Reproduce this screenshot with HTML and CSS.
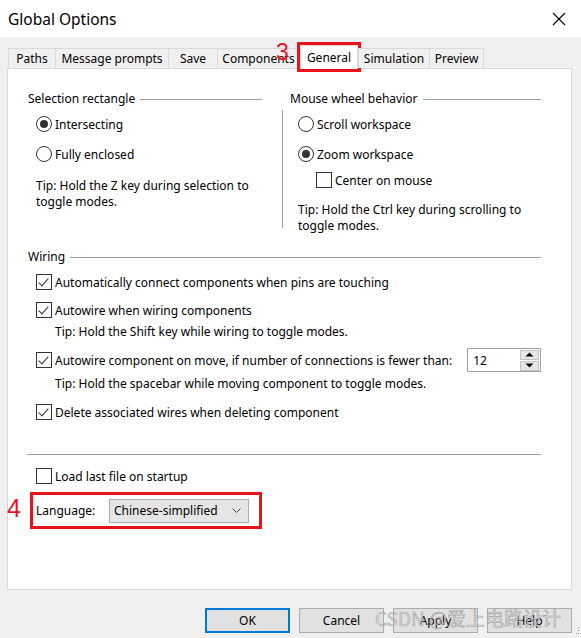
FILE: index.html
```html
<!DOCTYPE html>
<html>
<head>
<meta charset="utf-8">
<link rel="stylesheet" href="styles.css">
</head>
<body>
<div class="window">
  <div class="titlebar">
    <span class="title">Global Options</span>
    <svg class="close" width="14" height="14" viewBox="0 0 14 14"><path d="M1 1 L13 13 M13 1 L1 13" stroke="#000" stroke-width="1.1" fill="none"/></svg>
  </div>

  <div class="tabs">
    <div class="tab t-paths">Paths</div>
    <div class="tab t-msg">Message prompts</div>
    <div class="tab t-save">Save</div>
    <div class="tab t-comp">Components</div>
    <div class="tab t-gen active">General</div>
    <div class="tab t-sim">Simulation</div>
    <div class="tab t-prev">Preview</div>
  </div>

  <div class="panel">
    <div class="top">
      <div class="group left">
        <div class="heading"><span>Selection rectangle</span><i class="rule"></i></div>
        <div class="gbody">
          <div class="row r1"><span class="radio on"></span>Intersecting</div>
          <div class="row r2"><span class="radio"></span>Fully enclosed</div>
          <div class="tip t1">Tip: Hold the Z key during selection to<br>toggle modes.</div>
        </div>
      </div>
      <div class="group right">
        <div class="heading"><span>Mouse wheel behavior</span><i class="rule"></i></div>
        <div class="gbody divided">
          <div class="row"><span class="radio"></span>Scroll workspace</div>
          <div class="row r2"><span class="radio on"></span>Zoom workspace</div>
          <div class="row sub"><span class="check"></span>Center on mouse</div>
          <div class="tip t2">Tip: Hold the Ctrl key during scrolling to<br>toggle modes.</div>
        </div>
      </div>
    </div>

    <div class="wiring">
      <div class="heading"><span>Wiring</span><i class="rule"></i></div>
      <div class="wbody">
        <div class="row w1"><span class="check on"></span>Automatically connect components when pins are touching</div>
        <div class="row w2"><span class="check on"></span>Autowire when wiring components</div>
        <div class="tip wt">Tip: Hold the Shift key while wiring to toggle modes.</div>
        <div class="row w3"><span class="check on"></span>Autowire component on move, if number of connections is fewer than:
          <div class="spin"><span class="val">12</span>
            <div class="spinbtns">
              <span class="sb"><svg width="9" height="5" viewBox="0 0 9 5"><path d="M0.5 4.5 L4.5 0.5 L8.5 4.5Z" fill="#000"/></svg></span>
              <span class="sb"><svg width="9" height="5" viewBox="0 0 9 5"><path d="M0.5 0.5 L4.5 4.5 L8.5 0.5Z" fill="#000"/></svg></span>
            </div>
          </div>
        </div>
        <div class="tip wt">Tip: Hold the spacebar while moving component to toggle modes.</div>
        <div class="row w4"><span class="check on"></span>Delete associated wires when deleting component</div>
      </div>
    </div>

    <div class="sep"></div>
    <div class="row load"><span class="check"></span>Load last file on startup</div>
    <div class="langrow">
      <span class="langlabel">Language:</span>
      <div class="select"><span>Chinese-simplified</span>
        <svg width="9" height="5" viewBox="0 0 9 5"><path d="M0.5 0.5 L4.5 4.5 L8.5 0.5" stroke="#444" stroke-width="1" fill="none"/></svg>
      </div>
    </div>
  </div>

  <div class="buttons">
    <div class="btn default">OK</div>
    <div class="btn">Cancel</div>
    <div class="btn">Apply</div>
    <div class="btn">Help</div>
  </div>

  <svg class="grip" width="4" height="8" viewBox="0 0 4 8"><rect x="2" y="0" width="1" height="1" fill="#999"/><rect x="2" y="3" width="1" height="1" fill="#999"/><rect x="0" y="6" width="1" height="1" fill="#999"/><rect x="2" y="6" width="1" height="1" fill="#999"/></svg>
  <div class="mark mark3">3</div>
  <div class="mark mark4">4</div>
  <div class="redbox"></div>
  <div class="watermark">CSDN @爱上电路设计</div>
</div>
</body>
</html>
```
FILE: styles.css
```css
* { box-sizing: border-box; }
html, body { margin: 0; padding: 0; }
body {
  background: #f0f0f0;
  font-family: "Noto Sans", "Open Sans", "Liberation Sans", sans-serif;
  font-size: 12px;
  color: #000;
}
.window {
  position: relative;
  width: 581px;
  height: 638px;
  overflow: hidden;
  background: #f0f0f0;
}
.titlebar {
  height: 37px;
  background: #fff;
  display: flex;
  align-items: center;
  justify-content: space-between;
  padding: 0 15px 0 8px;
}
.title { font-size: 15.5px; }

.tabs {
  display: flex;
  margin: 11px 0 0 8px;
  height: 20px;
  position: relative;
  z-index: 2;
}
.tab {
  height: 20px;
  line-height: 19px;
  border: 1px solid #d9d9d9;
  border-bottom: none;
  margin-left: -1px;
  background: #f0f0f0;
  text-align: center;
}
.tab:first-child { margin-left: 0; }
.t-paths { width: 48px; }
.t-msg { width: 114px; }
.t-save { width: 50px; }
.t-comp { width: 83px; }
.t-gen { width: 58px; }
.t-sim { width: 72px; }
.t-prev { width: 55px; }
.tab.active {
  background: #fff;
  height: 24px;
  margin-top: -3px;
  line-height: 23px;
  margin-left: 0;
  margin-right: 1px;
  outline: 3px solid #e8141c;
}

.panel {
  margin-left: 7px;
  width: 565px;
  height: 522px;
  background: #fff;
  border: 1px solid #d9d9d9;
  padding: 22px 30px 0 20px;
  position: relative;
  z-index: 1;
}

.heading {
  display: flex;
  align-items: center;
  height: 16px;
  line-height: 16px;
}
.rule {
  flex: 1;
  border-top: 1px solid #a0a0a0;
  margin-left: 5px;
  margin-top: 1px;
}

.top {
  display: grid;
  grid-template-columns: 254px 1fr;
  height: 158px;
}
.left .heading { margin-right: 20px; }
.left .gbody { padding-left: 8px; }
.right .heading { margin-left: 8px; }
.gbody.divided {
  margin-top: 3px;
  height: 118px;
  border-left: 1px solid #a0a0a0;
  padding: 4px 0 0 15px;
}
.left .r1 { margin-top: 7px; }

.row {
  display: flex;
  align-items: center;
  height: 20px;
  white-space: nowrap;
}
.row.r2 { margin-top: 10px; }
.row.sub { margin-top: 6px; padding-left: 18px; }
.tip { line-height: 16px; }
.tip.t1 { margin-top: 14px; }
.tip.t2 { margin-top: 12px; }

.radio {
  width: 16px;
  height: 16px;
  border: 1px solid #333;
  border-radius: 50%;
  margin-right: 3px;
  position: relative;
  flex: none;
}
.radio.on::after {
  content: "";
  position: absolute;
  left: 3px;
  top: 3px;
  width: 8px;
  height: 8px;
  border-radius: 50%;
  background: #333;
}
.check {
  width: 16px;
  height: 16px;
  border: 1px solid #333;
  margin-right: 3px;
  position: relative;
  flex: none;
  background: #fff;
}
.check.on::after {
  content: "";
  position: absolute;
  left: 4px;
  top: 1px;
  width: 4px;
  height: 9px;
  border-right: 1px solid #333;
  border-bottom: 1px solid #333;
  transform: rotate(42deg);
}

.wbody { padding-left: 8px; }
.w1 { margin-top: 7px; }
.w2 { margin-top: 8px; }
.tip.wt { margin-top: 4px; padding-left: 19px; }
.w3 { margin-top: 8px; height: 24px; }
.w4 { margin-top: 10px; }

.spin {
  margin-left: 15px;
  width: 80px;
  height: 24px;
  border: 1px solid #a0a0a0;
  display: flex;
  align-items: center;
  justify-content: space-between;
  padding: 0 1px 0 5px;
}
.spinbtns {
  display: flex;
  flex-direction: column;
  gap: 1px;
}
.sb {
  width: 19px;
  height: 10px;
  background: #e6e6e6;
  border: 1px solid #c4c4c4;
  display: flex;
  align-items: center;
  justify-content: center;
}

.sep {
  margin: 32px 0 0 -1px;
  border-top: 1px solid #a0a0a0;
}
.row.load { margin: 11px 0 0 8px; }

.langrow {
  margin: 6px 0 0 2px;
  width: 232px;
  height: 37px;
  display: flex;
  align-items: center;
  padding-left: 6px;
}
.langlabel { width: 73px; }
.select {
  width: 140px;
  height: 24px;
  background: #e5e5e5;
  border: 1px solid #adadad;
  display: flex;
  align-items: center;
  justify-content: space-between;
  padding: 0 7px 0 4px;
}

.buttons {
  display: flex;
  justify-content: flex-end;
  gap: 9px;
  margin-top: 18px;
  padding-right: 9px;
}
.btn {
  width: 85px;
  height: 25px;
  background: #e1e1e1;
  border: 1px solid #adadad;
  display: flex;
  align-items: center;
  justify-content: center;
}
.btn.default { border: 2px solid #0078d7; }

.grip { position: absolute; right: 1px; bottom: 3px; }

.mark {
  position: absolute;
  color: #e8141c;
  font-family: "Liberation Sans", sans-serif;
  z-index: 5;
}
.mark3 { left: 276px; top: 39px; font-size: 23px; }
.mark4 { left: 7px; top: 494px; font-size: 25px; }
.redbox {
  position: absolute;
  left: 30px;
  top: 492px;
  width: 232px;
  height: 37px;
  border: 3px solid #e8141c;
  z-index: 5;
}
.watermark {
  position: absolute;
  left: 375px;
  top: 604px;
  font-size: 19px;
  font-family: "Noto Sans CJK SC", "Noto Sans", sans-serif;
  color: rgba(210, 210, 210, 0.75);
  -webkit-text-stroke: 0.6px rgba(120, 120, 120, 0.55);
  z-index: 6;
  white-space: nowrap;
}
```
